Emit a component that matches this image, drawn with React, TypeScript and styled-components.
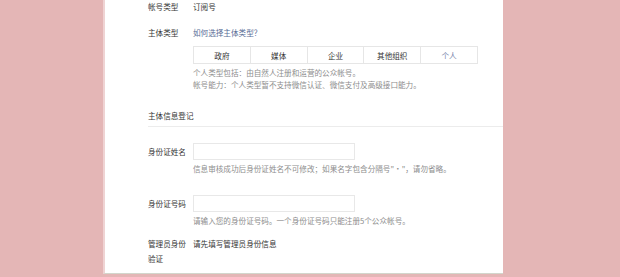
import React from "react";
import styled, { createGlobalStyle } from "styled-components";

const Global = createGlobalStyle`
  html, body { margin: 0; padding: 0; background: #e4b6b6; }
  body { font-family: "Noto Sans CJK SC", "Noto Sans", sans-serif; }
  * { box-sizing: border-box; }
`;

const Page = styled.div`
  width: 620px;
  height: 277px;
  overflow: hidden;
  background: #e4b6b6;
`;

const Panel = styled.div`
  margin-left: 103px;
  width: 400px;
  height: 274px;
  background: #fff;
  border-left: 2px solid #efd3d3;
  border-bottom: 1px solid #d3d6cc;
  padding: 1px 0 0 43px;
  overflow: hidden;
  font-size: 7.6px;
  line-height: 12px;
  color: #353535;
`;

const Row = styled.div<{ $mt?: number }>`
  display: flex;
  align-items: flex-start;
  margin-top: ${(p) => p.$mt || 0}px;
`;

const Label = styled.div<{ $lh?: number }>`
  width: 40px;
  margin-right: 5px;
  flex: none;
  line-height: ${(p) => p.$lh || 12}px;
  color: #353535;
`;

const Content = styled.div`
  display: flex;
  flex-direction: column;
`;

const Value = styled.div<{ $lh?: number }>`
  color: #333;
  line-height: ${(p) => p.$lh || 12}px;
`;

const Link = styled.a`
  color: #576b95;
  text-decoration: none;
`;

const Tabs = styled.div`
  display: flex;
  margin-top: 7px;
  width: 285px;
  height: 18px;
  border: 1px solid #e6e6e6;
`;

const Tab = styled.div<{ $active?: boolean }>`
  flex: 1;
  display: flex;
  align-items: center;
  justify-content: center;
  padding-top: 2px;
  color: ${(p) => (p.$active ? "#7886ab" : "#353535")};
  & + & { border-left: 1px solid #e6e6e6; }
`;

const Desc = styled.div<{ $mt?: number }>`
  color: #8d8d8d;
  margin-top: ${(p) => p.$mt || 0}px;
`;

const Section = styled.div`
  margin-top: 19px;
  padding-bottom: 4px;
  border-bottom: 1px solid #ececec;
  color: #353535;
`;

const Input = styled.div`
  width: 162px;
  height: 17px;
  border: 1px solid #e8e8e8;
  background: #fff;
`;

const Hint = styled.div`
  color: #8d8d8d;
  margin-top: 3px;
`;

export default function App() {
  return (
    <Page>
      <Global />
      <Panel>
        <Row>
          <Label>帐号类型</Label>
          <Value>订阅号</Value>
        </Row>
        <Row $mt={14}>
          <Label>主体类型</Label>
          <Content>
            <Link>如何选择主体类型？</Link>
            <Tabs>
              <Tab>政府</Tab>
              <Tab>媒体</Tab>
              <Tab>企业</Tab>
              <Tab>其他组织</Tab>
              <Tab $active>个人</Tab>
            </Tabs>
            <Desc $mt={3}>个人类型包括：由自然人注册和运营的公众帐号。</Desc>
            <Desc>帐号能力：个人类型暂不支持微信认证、微信支付及高级接口能力。</Desc>
          </Content>
        </Row>
        <Section>主体信息登记</Section>
        <Row $mt={16}>
          <Label $lh={17}>身份证姓名</Label>
          <Content>
            <Input />
            <Hint>信息审核成功后身份证姓名不可修改；如果名字包含分隔号"·"，请勿省略。</Hint>
          </Content>
        </Row>
        <Row $mt={20}>
          <Label $lh={17}>身份证号码</Label>
          <Content>
            <Input />
            <Hint>请输入您的身份证号码。一个身份证号码只能注册5个公众帐号。</Hint>
          </Content>
        </Row>
        <Row $mt={9}>
          <Label $lh={15}>管理员身份验证</Label>
          <Value $lh={15}>请先填写管理员身份信息</Value>
        </Row>
      </Panel>
    </Page>
  );
}
